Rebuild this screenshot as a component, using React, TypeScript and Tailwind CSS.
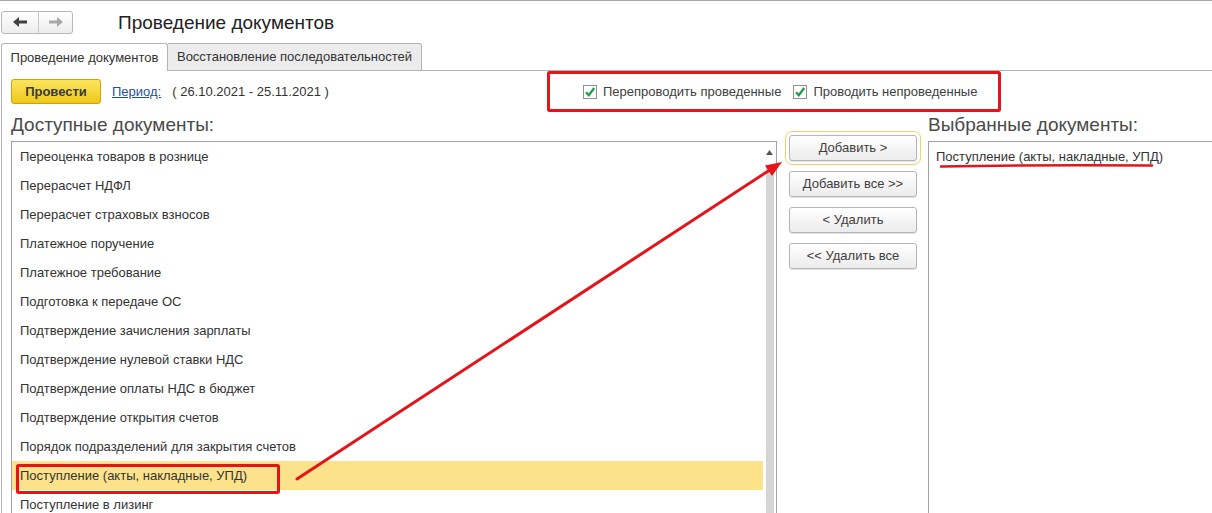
import React from 'react';

const docs = [
  'Переоценка товаров в рознице',
  'Перерасчет НДФЛ',
  'Перерасчет страховых взносов',
  'Платежное поручение',
  'Платежное требование',
  'Подготовка к передаче ОС',
  'Подтверждение зачисления зарплаты',
  'Подтверждение нулевой ставки НДС',
  'Подтверждение оплаты НДС в бюджет',
  'Подтверждение открытия счетов',
  'Порядок подразделений для закрытия счетов',
  'Поступление (акты, накладные, УПД)',
  'Поступление в лизинг',
];

const SELECTED = 11;

function Checkbox({ label }: { label: string }) {
  return (
    <label className="flex items-center gap-[6px] text-[13px] text-[#404040]">
      <span className="w-[14px] h-[14px] border border-[#8f8f8f] bg-white flex items-center justify-center">
        <svg width="12" height="12" viewBox="0 0 12 12">
          <path d="M2 6.2 L4.8 9.2 L10.2 2" fill="none" stroke="#22994a" strokeWidth="2.2" />
        </svg>
      </span>
      {label}
    </label>
  );
}

function SideButton({ children, focused }: { children: React.ReactNode; focused?: boolean }) {
  return (
    <button
      className={`w-[128px] h-[26px] rounded-[3px] border border-[#b5b5b5] bg-gradient-to-b from-white to-[#ececec] shadow-[0_1px_1px_rgba(0,0,0,0.12)] text-[13px] text-[#404040] ${
        focused ? 'outline outline-offset-[3px] outline-[#ead46a]' : ''
      }`}
    >
      {children}
    </button>
  );
}

export default function App() {
  return (
    <div className="relative w-[1212px] h-[513px] overflow-hidden bg-white text-[#333] font-['Liberation_Sans',Arial,sans-serif]">
      <div className="border-t border-[#a8a8a8]" />

      {/* Header */}
      <div className="h-[42px] flex items-center">
        <div className="ml-[1px] flex h-[23px] w-[72px] rounded-[3px] border border-[#b8b8b8] bg-gradient-to-b from-white to-[#ededed]">
          <div className="w-[37px] flex items-center justify-center border-r border-[#c8c8c8]">
            <svg width="14" height="10" viewBox="0 0 14 10">
              <polygon points="0,5 6,0 6,10" fill="#404040" />
              <rect x="5" y="3.5" width="9" height="3" fill="#404040" />
            </svg>
          </div>
          <div className="flex-1 flex items-center justify-center">
            <svg width="14" height="10" viewBox="0 0 14 10">
              <polygon points="14,5 8,0 8,10" fill="#a8a8a8" />
              <rect x="0" y="3.5" width="9" height="3" fill="#a8a8a8" />
            </svg>
          </div>
        </div>
        <div className="ml-[45px] text-[19px] text-[#222] leading-none">Проведение документов</div>
      </div>

      {/* Tabs */}
      <div className="flex h-[28px]">
        <div className="ml-[1px] w-[167px] shrink-0 border border-b-0 border-[#b3b3b3] rounded-t-[3px] bg-white flex items-center justify-center text-[13px] text-[#333]">
          Проведение документов
        </div>
        <div className="w-[254px] shrink-0 border border-l-0 border-[#b3b3b3] rounded-tr-[3px] bg-[#ececec] flex items-center justify-center text-[13px] text-[#333]">
          Восстановление последовательностей
        </div>
        <div className="flex-1 border-b border-[#b3b3b3]" />
      </div>

      {/* Content */}
      <div className="ml-[1px] border-l border-[#b3b3b3] pl-[9px] h-[442px]">
        <div className="pt-[8px] flex items-center h-[33px]">
          <div className="w-[572px] shrink-0 flex items-center">
            <button className="w-[90px] h-[25px] rounded-[3px] border border-[#c9a40a] bg-gradient-to-b from-[#fce55a] to-[#f0c80c] text-[13px] font-bold text-[#3a3a3a]">
              Провести
            </button>
            <a className="ml-[11px] text-[13px] text-[#1f4e9b] underline">Период:</a>
            <span className="ml-[11px] text-[13px] text-[#333]">( 26.10.2021 - 25.11.2021 )</span>
          </div>
          <div className="flex items-center gap-[12px]">
            <Checkbox label="Перепроводить проведенные" />
            <Checkbox label="Проводить непроведенные" />
          </div>
        </div>

        <div className="flex">
          {/* Available */}
          <div className="w-[766px] shrink-0">
            <div className="h-[37px] pt-[10px] text-[19px] leading-[22px] text-[#4a4a4a]">Доступные документы:</div>
            <div className="flex h-[420px] border border-[#a0a0a0]">
              <div className="flex-1">
                {docs.map((d, i) => (
                  <div
                    key={d}
                    className={`h-[29px] flex items-center pl-[8px] text-[13px] text-[#333] ${
                      i === SELECTED ? 'bg-[#fce38b]' : ''
                    }`}
                  >
                    {d}
                  </div>
                ))}
              </div>
              <div className="w-[13px] flex flex-col items-center pt-[8px]">
                <svg width="7" height="5" viewBox="0 0 7 5">
                  <polygon points="3.5,0 7,5 0,5" fill="#555" />
                </svg>
                <div className="mt-[10px] w-[8px] flex-1 bg-[#d5d5d5]" />
              </div>
            </div>
          </div>

          {/* Buttons */}
          <div className="w-[151px] shrink-0 pl-[12px] pt-[31px] flex flex-col gap-[10px]">
            <SideButton focused>Добавить &gt;</SideButton>
            <SideButton>Добавить все &gt;&gt;</SideButton>
            <SideButton>&lt; Удалить</SideButton>
            <SideButton>&lt;&lt; Удалить все</SideButton>
          </div>

          {/* Selected */}
          <div className="w-[400px] shrink-0">
            <div className="h-[37px] pt-[10px] text-[19px] leading-[22px] text-[#4a4a4a]">Выбранные документы:</div>
            <div className="h-[420px] border-l border-t border-[#a0a0a0]">
              <div className="h-[29px] flex items-center pl-[7px] text-[13px] text-[#333]">
                Поступление (акты, накладные, УПД)
              </div>
            </div>
          </div>
        </div>
      </div>

      {/* Red annotations */}
      <svg className="absolute left-0 top-0 pointer-events-none" width="1212" height="513" viewBox="0 0 1212 513">
        <rect x="548.5" y="72.5" width="451" height="38" fill="none" stroke="#e5141b" strokeWidth="3" rx="1" />
        <rect x="17.5" y="465.5" width="261" height="27" fill="none" stroke="#e5141b" strokeWidth="3" rx="1" />
        <line x1="297" y1="479" x2="769" y2="170.5" stroke="#e5141b" strokeWidth="3" strokeLinecap="round" />
        <polygon points="782,162 772,176 765,165.5" fill="#e5141b" />
        <path d="M941 166.5 Q1046 164.5 1152 165.5" fill="none" stroke="#e5141b" strokeWidth="2.5" strokeLinecap="round" />
      </svg>
    </div>
  );
}
